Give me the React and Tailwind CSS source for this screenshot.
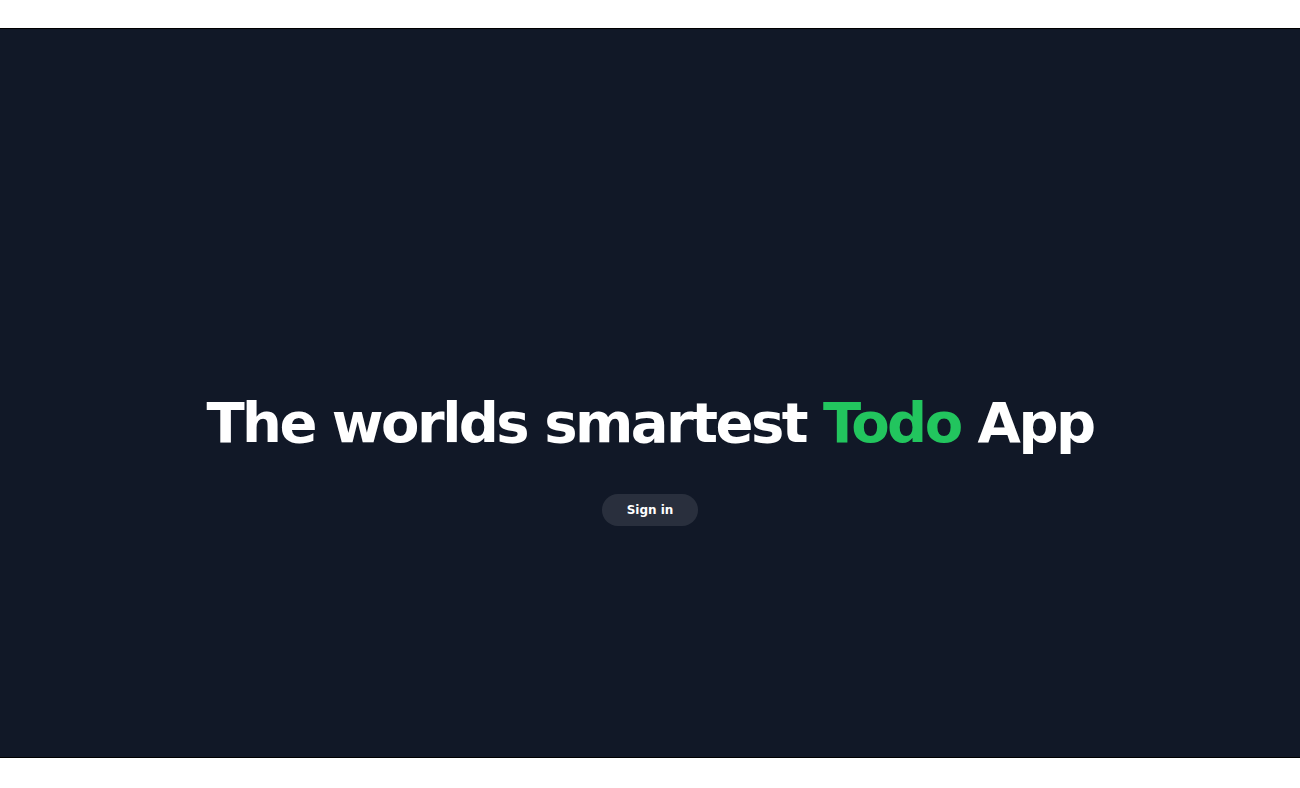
import React from "react";

const App = () => {
  return (
    <div
      className="min-h-screen bg-white py-[28px]"
      style={{ fontFamily: '"DejaVu Sans", sans-serif' }}
    >
      <main className="flex h-[730px] flex-col items-center justify-center border-y border-black bg-[#111827] pt-[135px]">
        <h1 className="text-[56px] font-bold leading-none tracking-[-0.045em] text-white">
          The worlds smartest <span className="text-[#22c55e]">Todo</span> App
        </h1>
        <button className="mt-[43px] rounded-full bg-white/10 px-[25px] py-2 text-xs font-bold text-white">
          Sign in
        </button>
      </main>
    </div>
  );
};

export default App;
